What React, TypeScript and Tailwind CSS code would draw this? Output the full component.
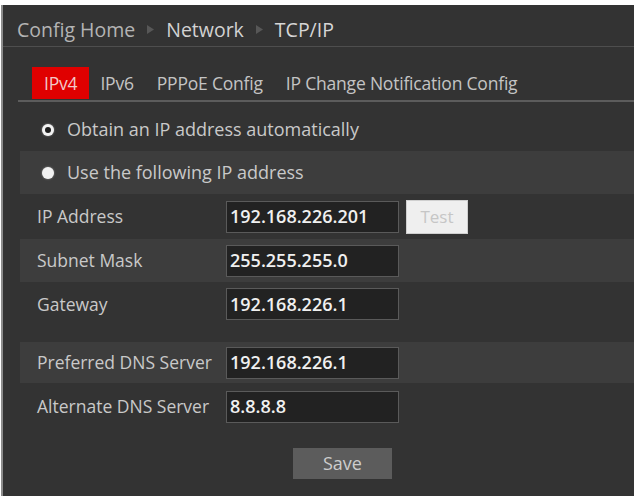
import { useState } from "react";

type Field = {
  label: string;
  value: string;
  h: string;
  shaded?: boolean;
  test?: boolean;
  gapBefore?: boolean;
};

const FIELDS: Field[] = [
  { label: "IP Address", value: "192.168.226.201", h: "h-[45px]", test: true },
  { label: "Subnet Mask", value: "255.255.255.0", h: "h-[43px]", shaded: true },
  { label: "Gateway", value: "192.168.226.1", h: "h-[44px]" },
  { label: "Preferred DNS Server", value: "192.168.226.1", h: "h-[41px]", shaded: true, gapBefore: true },
  { label: "Alternate DNS Server", value: "8.8.8.8", h: "h-[47px]" },
];

const TABS = ["IPv4", "IPv6", "PPPoE Config", "IP Change Notification Config"];

function Crumb() {
  return (
    <svg width="7" height="9" viewBox="0 0 7 9" className="mx-[12px] shrink-0">
      <polygon points="0,0 7,4.5 0,9" fill="#575757" />
    </svg>
  );
}

function Radio({ checked }: { checked: boolean }) {
  return (
    <span className="flex h-[12px] w-[12px] shrink-0 items-center justify-center rounded-full bg-[#f2f2f2] shadow-[0_0_2px_#ffffff80]">
      {checked && <span className="h-[6px] w-[6px] rounded-full bg-[#1e1e1e]" />}
    </span>
  );
}

export default function App() {
  const [tab, setTab] = useState(0);
  const [auto, setAuto] = useState(true);

  return (
    <div
      className="h-[496px] w-[634px] bg-white pt-[5px] text-[17px] text-[#c9c9c9]"
      style={{ fontFamily: '"Open Sans", "Noto Sans", sans-serif' }}
    >
      <div className="ml-[1px] flex h-full flex-col border-l-2 border-[#8c8c8c] bg-[#333333]">
        {/* breadcrumb */}
        <div className="flex h-[42px] shrink-0 items-center border-b border-[#4e4e4e] pl-[14px] pt-[8px] text-[19.5px]">
          <span className="text-[#b4b4b4]">Config Home</span>
          <Crumb />
          <span className="text-[#d2d2d2]">Network</span>
          <Crumb />
          <span className="text-[#d6d6d6]">TCP/IP</span>
        </div>

        {/* tabs */}
        <div className="ml-[15px] mt-[20px] flex items-end border-b-2 border-[#5c5c5c] pb-[1px] pl-[14px] text-[17.5px] tracking-[-0.2px]">
          {TABS.map((t, i) => (
            <button
              key={t}
              type="button"
              onClick={() => setTab(i)}
              className={
                i === tab
                  ? "mr-[11px] flex h-[32px] items-center bg-[#e00000] px-[12px] text-[#f2c9c9]"
                  : "mr-[23px] flex h-[32px] items-center text-[#c4c4c4]"
              }
            >
              {t}
            </button>
          ))}
        </div>

        {/* address mode */}
        <div className="ml-[17px] mt-[6px] flex flex-col">
          <label
            className="flex h-[43px] items-center gap-[13px] pl-[22px] text-[18px]"
            onClick={() => setAuto(true)}
          >
            <Radio checked={auto} />
            <span>Obtain an IP address automatically</span>
          </label>
          <label
            className="flex h-[43px] items-center gap-[13px] bg-[#3d3d3d] pl-[22px] text-[18px]"
            onClick={() => setAuto(false)}
          >
            <Radio checked={!auto} />
            <span>Use the following IP address</span>
          </label>

          {FIELDS.map((f) => (
            <div
              key={f.label}
              className={
                f.h +
                (f.shaded ? " bg-[#3d3d3d]" : "") +
                (f.gapBefore ? " mt-[16px]" : "") +
                " flex items-center pl-[17px]"
              }
            >
              <span className="w-[189px] shrink-0 text-[17.5px]">{f.label}</span>
              <div className="flex h-[32px] w-[173px] items-center border border-[#5a5a5a] bg-[#222222] px-[3px] text-[18px] font-semibold text-[#f0f0f0]">
                {f.value}
              </div>
              {f.test && (
                <button
                  type="button"
                  className="ml-[7px] h-[34px] w-[62px] border border-[#cfcfcf] bg-[#efefef] text-[17px] text-[#c6c6c6]"
                >
                  Test
                </button>
              )}
            </div>
          ))}
        </div>

        <div className="mt-[18px] pl-[290px]">
          <button
            type="button"
            className="h-[31px] w-[99px] bg-[#5c5c5c] text-[18px] text-[#cdcdcd]"
          >
            Save
          </button>
        </div>
      </div>
    </div>
  );
}
